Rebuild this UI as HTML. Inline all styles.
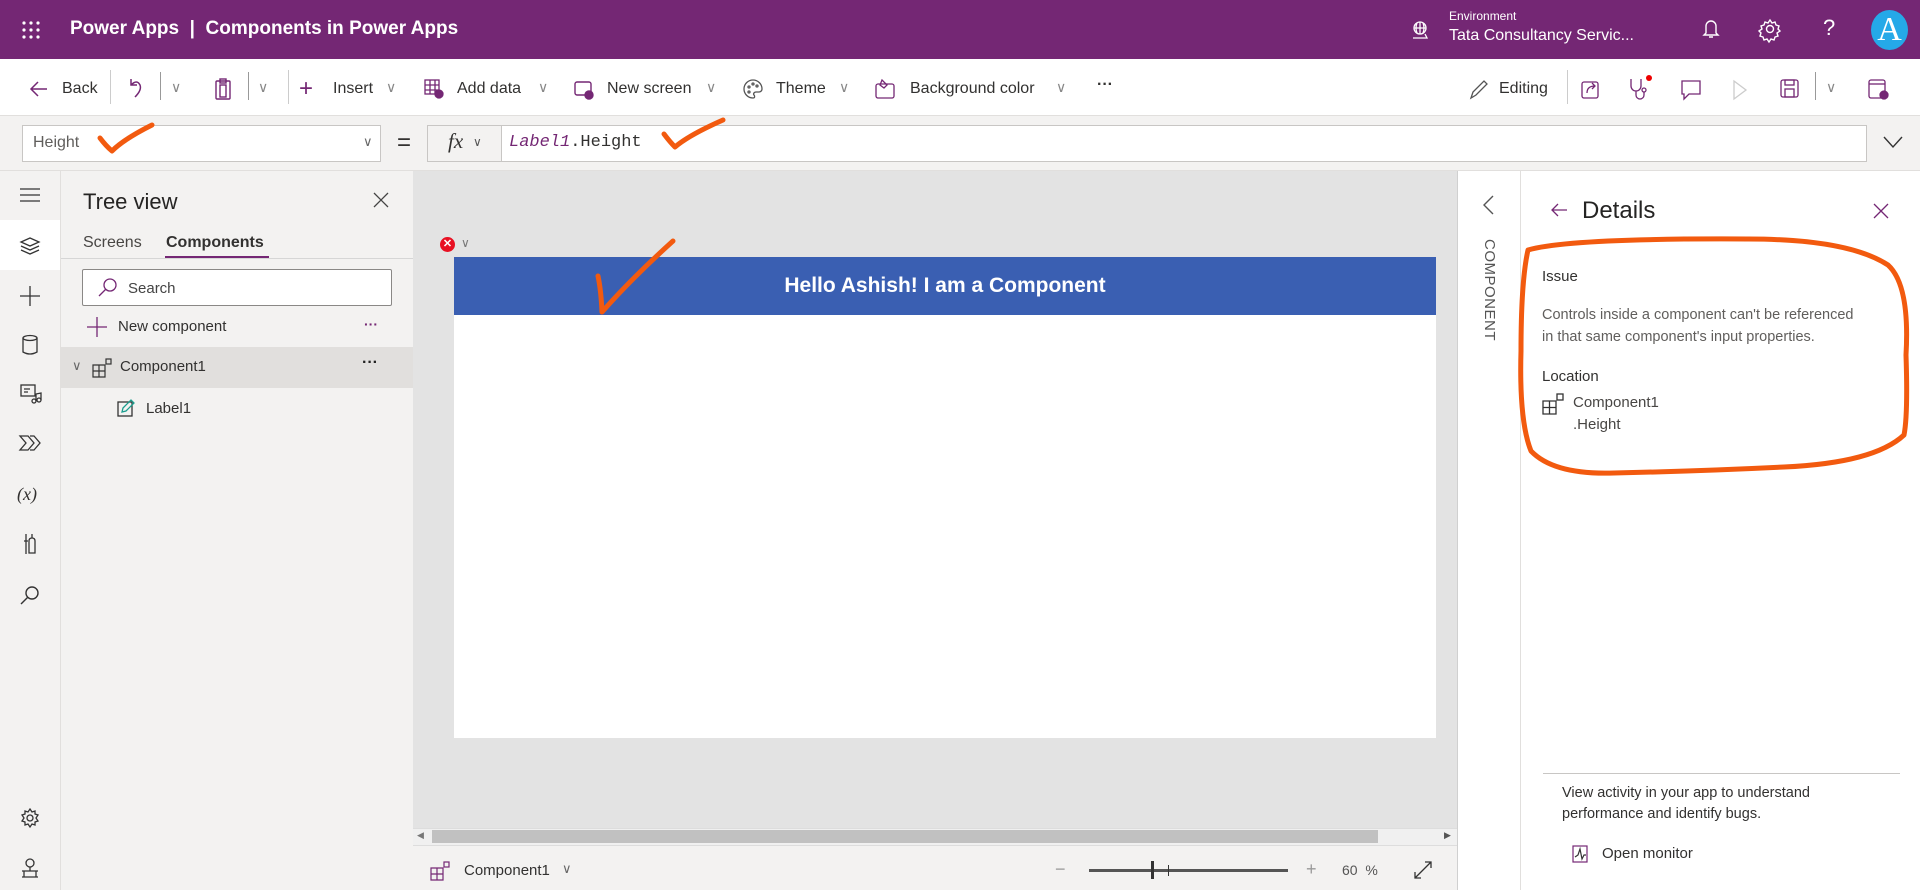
<!DOCTYPE html>
<html><head><meta charset="utf-8">
<style>
*{box-sizing:border-box;margin:0;padding:0}
body{width:1920px;height:890px;overflow:hidden;font-family:"Liberation Sans",sans-serif;color:#323130;background:#fff;position:relative}
.a{position:absolute}
.t{position:absolute;white-space:nowrap}
svg{overflow:visible}
</style></head><body>
<!-- top bar -->
<div class="a" style="left:0;top:0;width:1920px;height:59px;background:#742774"></div>
<svg class="a" style="left:22px;top:21px" width="18" height="18" fill="#fff"><circle cx="2" cy="2" r="1.6"/><circle cx="9" cy="2" r="1.6"/><circle cx="16" cy="2" r="1.6"/><circle cx="2" cy="9" r="1.6"/><circle cx="9" cy="9" r="1.6"/><circle cx="16" cy="9" r="1.6"/><circle cx="2" cy="16" r="1.6"/><circle cx="9" cy="16" r="1.6"/><circle cx="16" cy="16" r="1.6"/></svg>
<div class="t" style="left:70px;top:18px;font-size:19px;font-weight:bold;color:#fff">Power Apps &nbsp;|&nbsp; Components in Power Apps</div>
<svg class="a" style="left:1410px;top:20px" width="20" height="20" fill="none" stroke="#fff" stroke-width="1.3"><circle cx="10" cy="8" r="6"/><path d="M4 8h12M10 2v12M7 3q-2 5 0 10M13 3q2 5 0 10M3 18h14l-2-4"/></svg>
<div class="t" style="left:1449px;top:9px;font-size:12px;color:#fff">Environment</div>
<div class="t" style="left:1449px;top:27px;font-size:16px;color:#fff">Tata Consultancy Servic...</div>
<svg class="a" style="left:1702px;top:18px" width="18" height="22" fill="none" stroke="#fff" stroke-width="1.4"><path d="M4 15V8a5 5 0 0110 0v7l2 2H2zM7 19h4"/></svg>
<svg class="a" style="left:1759px;top:18px" width="22" height="22" fill="none" stroke="#fff" stroke-width="1.4"><circle cx="11" cy="11" r="3.5"/><path d="M11 2l2 3 3-1 1 3 3 1-1 3 2 2-3 2 1 3-3 1-1 3-3-1-2 3-2-3-3 1-1-3-3-1 1-3-2-2 3-2-1-3 3-1 1-3 3 1z"/></svg>
<div class="t" style="left:1823px;top:15px;font-size:22px;color:#fff">?</div>
<div class="a" style="left:1871px;top:10px;width:37px;height:40px;border-radius:50%;background:#25a9e8;color:#fff;font-family:'Liberation Serif',serif;font-size:34px;text-align:center;line-height:40px">A</div>

<!-- toolbar -->
<div class="a" style="left:0;top:59px;width:1920px;height:57px;background:#fff;border-bottom:1px solid #e1dfdd"></div>
<div style="font-size:16px;color:#323130">
<svg class="a" style="left:29px;top:80px" width="20" height="18" fill="none" stroke="#742774" stroke-width="1.5"><path d="M18 9H2M9 2L2 9l7 7"/></svg>
<div class="t" style="left:62px;top:80px">Back</div>
<div class="a" style="left:110px;top:70px;width:1px;height:34px;background:#ccc"></div>
<svg class="a" style="left:127px;top:77px" width="16" height="22" fill="none" stroke="#742774" stroke-width="1.5"><path d="M4 2v6h6M4 8q6-6 9 0q2 5-5 12"/></svg>
<div class="a" style="left:160px;top:72px;width:1px;height:28px;background:#999"></div>
<div class="t" style="left:171px;top:79px;color:#888;font-size:14px">∨</div>
<svg class="a" style="left:214px;top:77px" width="18" height="24" fill="none" stroke="#742774" stroke-width="1.4"><rect x="2" y="4" width="14" height="18" rx="1"/><rect x="6" y="2" width="6" height="4"/><rect x="6" y="8" width="6" height="12"/></svg>
<div class="a" style="left:248px;top:72px;width:1px;height:28px;background:#999"></div>
<div class="t" style="left:258px;top:79px;color:#888;font-size:14px">∨</div>
<div class="a" style="left:288px;top:70px;width:1px;height:34px;background:#ccc"></div>
<div class="t" style="left:299px;top:75px;color:#742774;font-size:24px;font-weight:300">+</div>
<div class="t" style="left:333px;top:80px">Insert</div><div class="t" style="left:386px;top:79px;color:#888;font-size:14px">∨</div>
<svg class="a" style="left:424px;top:79px" width="20" height="20" fill="none" stroke="#742774" stroke-width="1.3"><rect x="1" y="1" width="14" height="14"/><path d="M1 6h14M1 11h14M6 1v14M11 1v14"/><circle cx="15" cy="15" r="4" fill="#742774"/></svg>
<div class="t" style="left:457px;top:80px">Add data</div><div class="t" style="left:538px;top:79px;color:#888;font-size:14px">∨</div>
<svg class="a" style="left:574px;top:80px" width="20" height="20" fill="none" stroke="#742774" stroke-width="1.4"><rect x="1" y="2" width="16" height="13" rx="2"/><circle cx="15" cy="15" r="4" fill="#742774"/></svg>
<div class="t" style="left:607px;top:80px">New screen</div><div class="t" style="left:706px;top:79px;color:#888;font-size:14px">∨</div>
<svg class="a" style="left:743px;top:79px" width="20" height="20" fill="none" stroke="#555" stroke-width="1.3"><path d="M10 1a9 9 0 100 18c2 0 2-2 1-3s0-3 2-3h3a3 3 0 003-3A9 9 0 0010 1z"/><circle cx="6" cy="8" r="1"/><circle cx="10" cy="5" r="1"/><circle cx="14" cy="7" r="1"/><circle cx="6" cy="13" r="1"/></svg>
<div class="t" style="left:776px;top:80px">Theme</div><div class="t" style="left:839px;top:79px;color:#888;font-size:14px">∨</div>
<svg class="a" style="left:875px;top:78px" width="20" height="22" fill="none" stroke="#742774" stroke-width="1.3"><rect x="1" y="6" width="18" height="14" rx="2"/><path d="M7 2l5 5-3 3-4-3z"/></svg>
<div class="t" style="left:910px;top:80px">Background color</div><div class="t" style="left:1056px;top:79px;color:#888;font-size:14px">∨</div>
<div class="t" style="left:1097px;top:76px;font-weight:bold">···</div>
<svg class="a" style="left:1469px;top:78px" width="20" height="22" fill="none" stroke="#555" stroke-width="1.3"><path d="M2 20l2-6L15 3l3 3L7 17z"/></svg>
<div class="t" style="left:1499px;top:80px">Editing</div>
<div class="a" style="left:1567px;top:70px;width:1px;height:34px;background:#ccc"></div>
<svg class="a" style="left:1581px;top:79px" width="20" height="20" fill="none" stroke="#742774" stroke-width="1.3"><rect x="1" y="3" width="16" height="16" rx="2"/><path d="M6 14q0-7 8-7M11 4l3 3-3 3"/></svg>
<svg class="a" style="left:1628px;top:77px" width="24" height="24" fill="none" stroke="#742774" stroke-width="1.3"><path d="M3 2v7a5 5 0 0010 0V2M8 14v4a4 4 0 008 0v-3"/><circle cx="16" cy="13" r="2"/><circle cx="21" cy="1" r="3" fill="#e00" stroke="none"/></svg>
<svg class="a" style="left:1680px;top:79px" width="22" height="22" fill="none" stroke="#742774" stroke-width="1.3"><path d="M2 2h18v13H9l-5 5v-5H2z"/></svg>
<svg class="a" style="left:1732px;top:80px" width="16" height="20" fill="none" stroke="#ccc" stroke-width="1.3"><path d="M2 1l12 9-12 9z"/></svg>
<svg class="a" style="left:1780px;top:79px" width="20" height="20" fill="none" stroke="#742774" stroke-width="1.3"><rect x="1" y="1" width="17" height="17" rx="2"/><rect x="5" y="1" width="9" height="5"/><rect x="5" y="10" width="9" height="8"/></svg>
<div class="a" style="left:1815px;top:72px;width:1px;height:28px;background:#999"></div>
<div class="t" style="left:1826px;top:79px;color:#888;font-size:14px">∨</div>
<svg class="a" style="left:1868px;top:78px" width="22" height="22" fill="none" stroke="#742774" stroke-width="1.3"><rect x="1" y="2" width="16" height="18" rx="2"/><path d="M1 6h16"/><circle cx="16" cy="17" r="4" fill="#742774"/></svg>
</div>

<!-- formula bar -->
<div class="a" style="left:0;top:116px;width:1920px;height:55px;background:#f3f2f1;border-bottom:1px solid #e1dfdd"></div>
<div class="a" style="left:22px;top:125px;width:359px;height:37px;background:#fff;border:1px solid #c8c6c4"></div>
<div class="t" style="left:33px;top:134px;font-size:16px;color:#605e5c">Height</div>
<div class="t" style="left:363px;top:134px;font-size:13px;color:#666">∨</div>
<div class="t" style="left:397px;top:129px;font-size:24px">=</div>
<div class="a" style="left:427px;top:125px;width:1440px;height:37px;background:#fff;border:1px solid #c8c6c4"></div>
<div class="a" style="left:427px;top:125px;width:75px;height:37px;background:#f3f2f1;border:1px solid #c8c6c4"></div>
<div class="t" style="left:448px;top:129px;font-size:21px;font-family:'Liberation Serif',serif;font-style:italic">fx</div>
<div class="t" style="left:473px;top:135px;font-size:12px;color:#555">∨</div>
<div class="t" style="left:509px;top:133px;font-size:17px;font-family:'Liberation Mono',monospace"><span style="color:#742774;font-style:italic">Label1</span>.Height</div>
<div class="a" style="left:1867px;top:125px;width:53px;height:37px;background:#f3f2f1"></div>
<svg class="a" style="left:1883px;top:136px" width="20" height="12" fill="none" stroke="#333" stroke-width="1.4"><path d="M1 1l9 10 9-10"/></svg>

<!-- left rail -->
<div class="a" style="left:0;top:171px;width:61px;height:719px;background:#f3f2f1;border-right:1px solid #e1dfdd"></div>
<div class="a" style="left:0;top:220px;width:60px;height:50px;background:#fff"></div>
<svg class="a" style="left:20px;top:188px" width="20" height="14" stroke="#333" stroke-width="1.2"><path d="M0 1h20M0 7h20M0 13h20"/></svg>
<svg class="a" style="left:19px;top:236px" width="22" height="20" fill="none" stroke="#333" stroke-width="1.3"><path d="M11 2l9 4-9 4-9-4z M2 10l9 4 9-4M2 14l9 4 9-4"/></svg>
<svg class="a" style="left:20px;top:286px" width="20" height="20" stroke="#333" stroke-width="1.3"><path d="M10 0v20M0 10h20"/></svg>
<svg class="a" style="left:22px;top:335px" width="16" height="20" fill="none" stroke="#333" stroke-width="1.3"><ellipse cx="8" cy="3" rx="7" ry="2.5"/><path d="M1 3v14q7 4 14 0V3"/></svg>
<svg class="a" style="left:20px;top:384px" width="22" height="20" fill="none" stroke="#333" stroke-width="1.3"><rect x="1" y="1" width="14" height="11"/><path d="M4 5h6M4 8h4"/><circle cx="14" cy="17" r="2"/><circle cx="19" cy="16" r="2"/><path d="M16 17V10l5-1v7"/></svg>
<svg class="a" style="left:19px;top:434px" width="22" height="18" fill="none" stroke="#333" stroke-width="1.3"><path d="M1 2h8l6 7-6 7H1l6-7zM11 2h4l6 7-6 7h-4"/></svg>
<div class="t" style="left:17px;top:484px;font-size:18px;font-family:'Liberation Serif',serif;font-style:italic">(x)</div>
<svg class="a" style="left:22px;top:533px" width="16" height="22" fill="none" stroke="#333" stroke-width="1.3"><path d="M4 1v20M10 1v4q3 0 3 3v12h-6V8q0-3 3-3M2 8h4"/></svg>
<svg class="a" style="left:20px;top:585px" width="20" height="20" fill="none" stroke="#333" stroke-width="1.4"><circle cx="12" cy="8" r="6"/><path d="M8 12l-7 7"/></svg>
<svg class="a" style="left:20px;top:808px" width="20" height="20" fill="none" stroke="#333" stroke-width="1.3"><circle cx="10" cy="10" r="3"/><path d="M10 1l2 3 3-1 0 3 3 1-2 3 2 3-3 1 0 3-3-1-2 3-2-3-3 1 0-3-3-1 2-3-2-3 3-1 0-3 3 1z"/></svg>
<svg class="a" style="left:20px;top:858px" width="20" height="20" fill="none" stroke="#333" stroke-width="1.3"><circle cx="10" cy="5" r="4"/><path d="M2 13h16M4 13v6M16 13v6M10 9v4M2 19h16"/></svg>

<!-- tree panel -->
<div class="a" style="left:61px;top:171px;width:352px;height:719px;background:#f3f2f1"></div>
<div class="t" style="left:83px;top:189px;font-size:22px;color:#252423">Tree view</div>
<svg class="a" style="left:374px;top:193px" width="14" height="14" stroke="#444" stroke-width="1.3"><path d="M0 0l14 14M14 0L0 14"/></svg>
<div class="t" style="left:83px;top:234px;font-size:16px;color:#484644">Screens</div>
<div class="t" style="left:166px;top:234px;font-size:16px;font-weight:bold;color:#323130">Components</div>
<div class="a" style="left:61px;top:258px;width:352px;height:1px;background:#d6d6d6"></div>
<div class="a" style="left:165px;top:256px;width:104px;height:2px;background:#742774"></div>
<div class="a" style="left:82px;top:269px;width:310px;height:37px;background:#fff;border:1px solid #8a8886;border-radius:2px"></div>
<svg class="a" style="left:98px;top:278px" width="20" height="20" fill="none" stroke="#742774" stroke-width="1.3"><circle cx="12" cy="7" r="6"/><path d="M8 11l-7 7"/></svg>
<div class="t" style="left:128px;top:280px;font-size:15px;color:#444">Search</div>
<svg class="a" style="left:87px;top:317px" width="20" height="20" stroke="#742774" stroke-width="1.3"><path d="M10 0v20M0 10h20"/></svg>
<div class="t" style="left:118px;top:318px;font-size:15px;color:#323130">New component</div>
<div class="t" style="left:364px;top:316px;font-size:14px;font-weight:bold;color:#742774">···</div>
<div class="a" style="left:61px;top:347px;width:352px;height:41px;background:#e1dfdd"></div>
<div class="t" style="left:72px;top:358px;font-size:13px;color:#666">∨</div>
<svg class="a" style="left:92px;top:358px" width="20" height="20" fill="none" stroke="#333" stroke-width="1.2"><path d="M1 7h12v12H1zM1 13h12M7 7v12"/><rect x="14" y="1" width="5" height="5"/></svg>
<div class="t" style="left:120px;top:358px;font-size:15px;color:#323130">Component1</div>
<div class="t" style="left:362px;top:354px;font-size:16px;font-weight:bold;color:#222">···</div>
<svg class="a" style="left:117px;top:399px" width="18" height="18" fill="none" stroke-width="1.3"><rect x="1" y="3" width="14" height="14" stroke="#333"/><path d="M5 13l1-4 8-8 3 3-8 8z" stroke="#1a9e8f"/></svg>
<div class="t" style="left:146px;top:400px;font-size:15px;color:#323130">Label1</div>

<!-- canvas -->
<div class="a" style="left:413px;top:171px;width:1044px;height:657px;background:#e3e3e3"></div>
<div class="a" style="left:440px;top:237px;width:15px;height:15px;border-radius:50%;background:#e81123;color:#fff;font-size:11px;font-weight:bold;text-align:center;line-height:15px">✕</div>
<div class="t" style="left:461px;top:236px;font-size:12px;color:#777">∨</div>
<div class="a" style="left:454px;top:257px;width:982px;height:481px;background:#fff"></div>
<div class="a" style="left:454px;top:257px;width:982px;height:58px;background:#3a5fb2;color:#fff;font-size:21px;font-weight:bold;text-align:center;line-height:58px">Hello Ashish! I am a Component</div>
<!-- scrollbar -->
<div class="a" style="left:413px;top:828px;width:1044px;height:17px;background:#f0f0f0;border-top:1px solid #ddd"></div>
<div class="a" style="left:432px;top:830px;width:946px;height:13px;background:#c1c1c1"></div>
<div class="t" style="left:417px;top:830px;font-size:9px;color:#777">◀</div>
<div class="t" style="left:1444px;top:830px;font-size:9px;color:#555">▶</div>
<!-- bottom bar -->
<div class="a" style="left:413px;top:845px;width:1044px;height:45px;background:#f3f2f1;border-top:1px solid #ddd"></div>
<svg class="a" style="left:430px;top:861px" width="20" height="20" fill="none" stroke="#742774" stroke-width="1.2"><path d="M1 7h12v12H1zM1 13h12M7 7v12"/><rect x="14" y="1" width="5" height="5"/></svg>
<div class="t" style="left:464px;top:862px;font-size:15px;color:#323130">Component1</div>
<div class="t" style="left:562px;top:861px;font-size:13px;color:#666">∨</div>
<div class="t" style="left:1055px;top:859px;font-size:18px;color:#999">−</div>
<div class="a" style="left:1089px;top:869px;width:199px;height:3px;background:#555"></div>
<div class="a" style="left:1151px;top:861px;width:3px;height:18px;background:#333"></div>
<div class="a" style="left:1168px;top:865px;width:1px;height:11px;background:#333"></div>
<div class="t" style="left:1306px;top:859px;font-size:18px;color:#999">+</div>
<div class="t" style="left:1342px;top:862px;font-size:14px;color:#555">60 &nbsp;%</div>
<svg class="a" style="left:1413px;top:860px" width="20" height="20" fill="none" stroke="#333" stroke-width="1.3"><path d="M2 18L18 2M12 2h6v6M2 12v6h6"/></svg>

<!-- component column -->
<div class="a" style="left:1457px;top:171px;width:64px;height:719px;background:#fff;border-left:1px solid #d0d0d0;border-right:1px solid #e1dfdd"></div>
<svg class="a" style="left:1482px;top:195px" width="12" height="20" fill="none" stroke="#555" stroke-width="1.4"><path d="M11 1L2 10l9 9"/></svg>
<div class="t" style="left:1481px;top:239px;font-size:15px;color:#555;writing-mode:vertical-rl;letter-spacing:0.5px">COMPONENT</div>

<!-- details -->
<div class="a" style="left:1521px;top:171px;width:399px;height:719px;background:#fff"></div>
<svg class="a" style="left:1551px;top:203px" width="16" height="14" fill="none" stroke="#742774" stroke-width="1.3"><path d="M16 7H1M7 1L1 7l6 6"/></svg>
<div class="t" style="left:1582px;top:197px;font-size:24px;color:#252423">Details</div>
<svg class="a" style="left:1874px;top:204px" width="14" height="14" stroke="#742774" stroke-width="1.3"><path d="M0 0l14 14M14 0L0 14"/></svg>
<div class="t" style="left:1542px;top:268px;font-size:15px;color:#323130">Issue</div>
<div class="t" style="left:1542px;top:304px;font-size:14.5px;color:#605e5c;line-height:22px">Controls inside a component can't be referenced<br>in that same component's input properties.</div>
<div class="t" style="left:1542px;top:368px;font-size:15px;color:#323130">Location</div>
<svg class="a" style="left:1542px;top:393px" width="22" height="22" fill="none" stroke="#333" stroke-width="1.3"><path d="M1 8h13v13H1zM1 14.5h13M7.5 8v13"/><rect x="15" y="1" width="6" height="6"/></svg>
<div class="t" style="left:1573px;top:394px;font-size:15px;color:#484644">Component1</div>
<div class="t" style="left:1573px;top:416px;font-size:15px;color:#484644">.Height</div>
<div class="a" style="left:1543px;top:773px;width:357px;height:1px;background:#c8c6c4"></div>
<div class="t" style="left:1562px;top:783px;font-size:14.5px;color:#323130;line-height:21px">View activity in your app to understand<br>performance and identify bugs.</div>
<svg class="a" style="left:1572px;top:845px" width="16" height="18" fill="none" stroke="#742774" stroke-width="1.2"><rect x="1" y="1" width="14" height="16"/><path d="M3 12l3-2 2-6 2 10 2-4h2" stroke="#333"/></svg>
<div class="t" style="left:1602px;top:845px;font-size:15px;color:#323130">Open monitor</div>

<!-- orange annotations -->
<svg class="a" style="left:0;top:0" width="1920" height="890" fill="none" stroke="#f25a0f" stroke-width="5" stroke-linecap="round" stroke-linejoin="round">
<path d="M100 138q6 8 12 13q12-12 40-26"/>
<path d="M664 134q6 8 11 13q14-12 48-27"/>
<path d="M598 276q3 14 4 36q30-34 71-71"/>
<path d="M1528 250q40-12 220-11q100 0 140 26q22 20 18 90q2 60-2 80q-30 28-120 32q-80 4-170 6q-60 2-83-22q-12-30-10-100q0-70 7-101"/>
</svg>
</body></html>
